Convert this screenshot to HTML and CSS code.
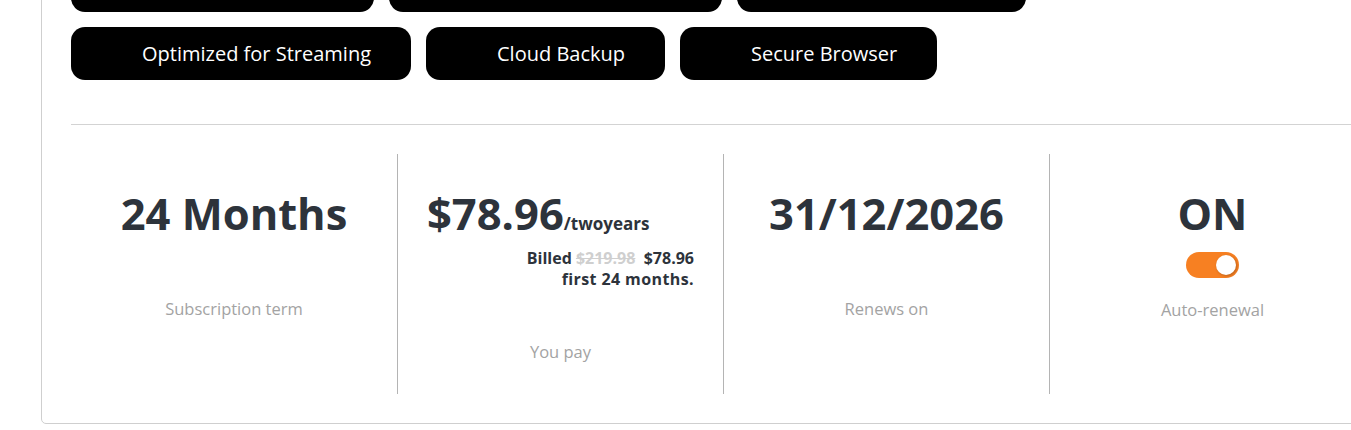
FILE: index.html
```html
<!DOCTYPE html>
<html lang="en">
<head>
<meta charset="utf-8">
<title>Subscription</title>
<link rel="stylesheet" href="styles.css">
</head>
<body>
<div class="card">
  <div class="pills">
    <span class="pill pill-a" aria-hidden="true"></span>
    <span class="pill pill-b" aria-hidden="true"></span>
    <span class="pill pill-c" aria-hidden="true"></span>
    <span class="pill">Optimized for Streaming</span>
    <span class="pill">Cloud Backup</span>
    <span class="pill">Secure Browser</span>
  </div>
  <div class="divider"></div>
  <div class="stats">
    <div class="stat">
      <div class="value">24 Months</div>
      <div class="label">Subscription term</div>
    </div>
    <div class="stat">
      <div class="price-block">
        <div class="value price">$78.96<span class="per">/twoyears</span></div>
        <div class="billed">Billed <span class="old">$219.98</span>&nbsp; $78.96<br><span class="first">first 24 months.</span></div>
      </div>
      <div class="label label-pay">You pay</div>
    </div>
    <div class="stat">
      <div class="value">31/12/2026</div>
      <div class="label">Renews on</div>
    </div>
    <div class="stat">
      <div class="value">ON</div>
      <div class="toggle"><span class="knob"></span></div>
      <div class="label label-toggle">Auto-renewal</div>
    </div>
  </div>
</div>
</body>
</html>
```

FILE: styles.css
```css
* { box-sizing: border-box; }
html, body { margin: 0; padding: 0; background: #fff; }
body {
  font-family: "Open Sans", "Liberation Sans", sans-serif;
  overflow: hidden;
  width: 1351px;
  height: 430px;
}
.card {
  margin-left: 41px;
  margin-top: -72px;
  width: 1364px;
  border: 1px solid #cfcfcf;
  border-radius: 5px;
  padding: 30px 29px 29px 29px;
}
.pills {
  display: flex;
  flex-wrap: wrap;
  gap: 15px;
  width: 980px;
}
.pill {
  display: inline-block;
  background: #000;
  color: #fff;
  font-size: 20px;
  line-height: 27px;
  height: 53px;
  padding: 13px 40px 13px 71px;
  border-radius: 14px;
  white-space: nowrap;
}
.pill-a { width: 303px; }
.pill-b { width: 333px; }
.pill-c { width: 289px; }
.divider {
  margin-top: 44px;
  height: 1px;
  background: #d3d3d3;
  margin-right: -40px;
}
.stats {
  display: grid;
  grid-template-columns: 326px 326px 326px 326px;
  margin-top: 29px;
}
.stat {
  height: 240px;
  padding-top: 30px;
  display: flex;
  flex-direction: column;
  align-items: center;
  color: #2d333b;
}
.stat + .stat { border-left: 1px solid #b4b4b4; }
.value {
  font-size: 43.5px;
  font-weight: 700;
  line-height: 60px;
  white-space: nowrap;
}
.price-block {
  width: 267px;
  display: flex;
  flex-direction: column;
}
.price { text-align: left; }
.per { font-size: 17px; }
.billed {
  text-align: right;
  font-size: 16px;
  font-weight: 700;
  line-height: 21px;
  margin-top: -6px;
}
.first { letter-spacing: 0.4px; }
.old { color: #cfcfcf; text-decoration: line-through; }
.label {
  margin-top: 53px;
  font-size: 16.5px;
  line-height: 24px;
  color: #a3a3a3;
}
.label-pay { margin-top: 50px; }
.label-toggle { margin-top: 20px; }
.toggle {
  margin-top: 8px;
  width: 53px;
  height: 26px;
  border-radius: 13px;
  background: #f78022;
  position: relative;
}
.knob {
  position: absolute;
  top: 3px;
  right: 3px;
  width: 20px;
  height: 20px;
  border-radius: 50%;
  background: #fff;
  box-shadow: 1px 1px 3px rgba(0,0,0,0.25);
}
```
